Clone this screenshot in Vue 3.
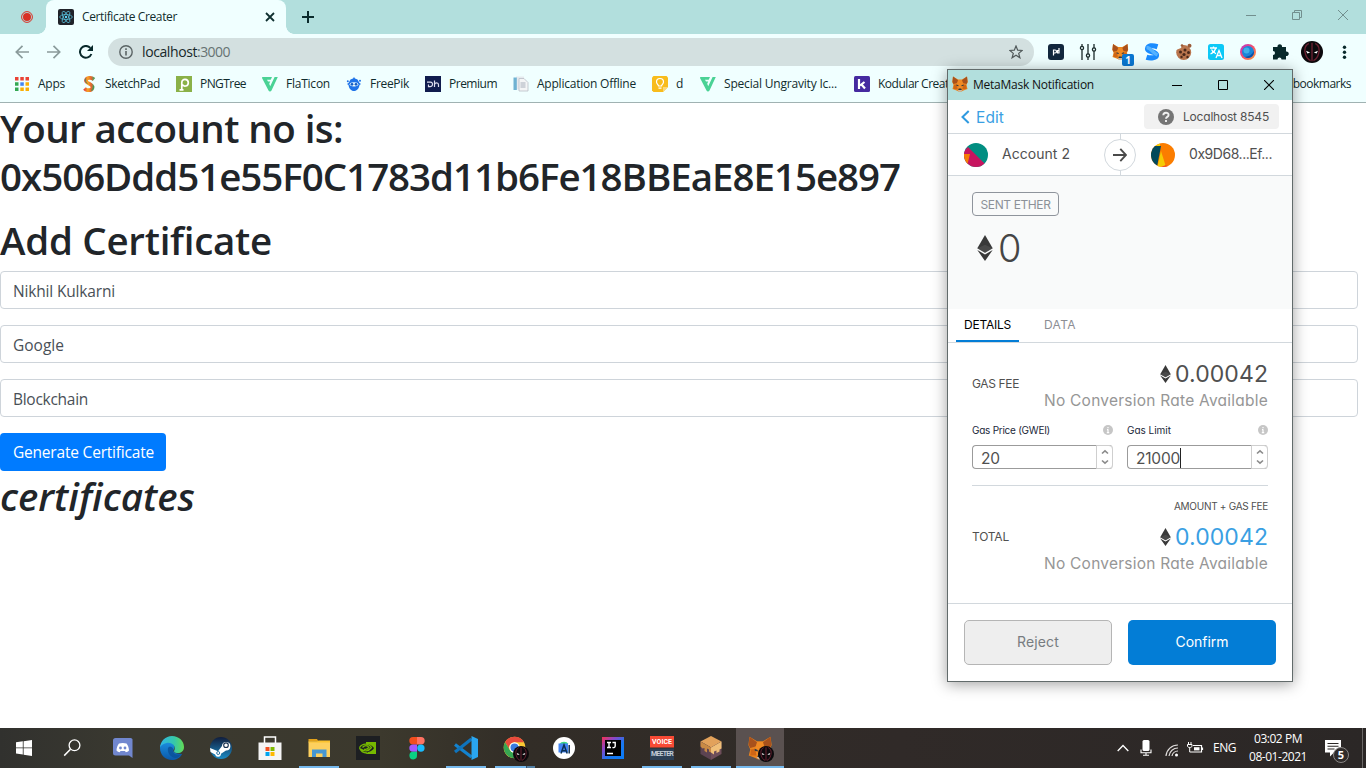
<script setup>
// Spreads the letters of a label so that it fills a given width in pixels.
const vFit = {
  mounted(el, { value }) {
    if (!value) return
    const range = document.createRange()
    range.selectNodeContents(el)
    const natural = range.getBoundingClientRect().width
    const count = el.textContent.trim().length
    el.style.letterSpacing = ((value - natural) / count).toFixed(3) + 'px'
  },
}

const bookmarks = [
  { icon: 'b-apps', label: 'Apps', w: 27 },
  { icon: 'b-sketch', label: 'SketchPad', w: 55 },
  { icon: 'b-png', label: 'PNGTree', w: 46 },
  { icon: 'b-flat', label: 'FlaTicon', w: 44 },
  { icon: 'b-freepik', label: 'FreePik', w: 39 },
  { icon: 'b-premium', label: 'Premium', w: 48 },
  { icon: 'b-doc', label: 'Application Offline', w: 99 },
  { icon: 'b-keep', label: 'd', w: 8 },
  { icon: 'b-flat', label: 'Special Ungravity Ic...', w: 113 },
  { icon: 'b-kodular', label: 'Kodular Creator', w: 82 },
]

const extensions = ['x-pd', 'x-sliders', 'x-fox', 'x-s', 'x-cookie', 'x-translate', 'x-orb', 'x-puzzle', 'x-avatar', 'x-menu']

const fields = [
  { value: 'Nikhil Kulkarni', w: 102 },
  { value: 'Google', w: 51 },
  { value: 'Blockchain', w: 75 },
]

const gasFields = [
  { label: 'Gas Price (GWEI)', w: 78, value: '20', vw: 19, caret: false },
  { label: 'Gas Limit', w: 44, value: '21000', vw: 44, caret: true },
]

const tasks = [
  { icon: 't-win' }, { icon: 't-search' }, { icon: 't-discord' }, { icon: 't-edge' },
  { icon: 't-steam' }, { icon: 't-store' }, { icon: 't-explorer', run: true }, { icon: 't-nvidia' },
  { icon: 't-figma' }, { icon: 't-vscode', run: true }, { icon: 't-chrome', run: true, multi: true },
  { icon: 't-studio' }, { icon: 't-idea' }, { icon: 't-voice', run: true },
  { icon: 't-launcher', run: true }, { icon: 't-metamask', active: true },
]
</script>

<template>
  <div class="screen">
    <svg class="sprite" width="0" height="0">
      <defs>
        <linearGradient id="gEdgeA" x1="0" y1="0" x2="1" y2="0"><stop offset="0" stop-color="#2fb5e8" /><stop offset=".6" stop-color="#36c8a8" /><stop offset="1" stop-color="#63dc55" /></linearGradient>
        <linearGradient id="gEdgeB" x1="0" y1="0" x2="0" y2="1"><stop offset="0" stop-color="#1b8fe0" /><stop offset="1" stop-color="#0b58a8" /></linearGradient>
        <linearGradient id="gSteam" x1="0" y1="0" x2="0" y2="1"><stop offset="0" stop-color="#111d3c" /><stop offset="1" stop-color="#1b8bc5" /></linearGradient>
        <linearGradient id="gOrb" x1="0" y1="0" x2="1" y2="1"><stop offset="0" stop-color="#b92fd0" /><stop offset=".5" stop-color="#f2506a" /><stop offset="1" stop-color="#ffa63e" /></linearGradient>
        <linearGradient id="gS" x1="0" y1="0" x2="1" y2="0"><stop offset="0" stop-color="#e8473c" /><stop offset=".35" stop-color="#f5a623" /><stop offset=".7" stop-color="#e9622f" /><stop offset="1" stop-color="#4d9f5e" /></linearGradient>
        <linearGradient id="gIdea" x1="0" y1="0" x2="1" y2="1"><stop offset="0" stop-color="#f9314f" /><stop offset=".3" stop-color="#8b46c8" /><stop offset=".6" stop-color="#1a78f0" /><stop offset="1" stop-color="#087cfa" /></linearGradient>
      </defs>

      <symbol id="fox" viewBox="0 0 32 32">
        <path fill="#e8821e" d="M2 1l10 6h8l10-6 1.500 11-2.500 6 2 8-8 3-4 2h-6l-4-2-8-3 2-8-2.500-6z" />
        <path fill="#a8511c" d="M2 1l11 8-3 5-7 2-2-4zM30 1L19 9l3 5 7 2 2-4z" />
        <path fill="#f08a24" d="M12 8h8l3 11-3 7h-8l-3-7z" />
        <path fill="#cf6616" d="M4 18l6-1 1 9-8 0zM28 18l-6-1-1 9 8 0z" />
        <path fill="#2d3a45" d="M9 17l4 1.500v2l-4-1zM23 17l-4 1.500v2l4-1zM13.500 25h5l1 3h-7z" />
        <path fill="#c9b8a8" d="M11 28h10l-3 3h-4z" />
      </symbol>
      <symbol id="mask" viewBox="0 0 24 24">
        <circle cx="12" cy="12" r="12" fill="#0c0a0d" />
        <path d="M8.500 2.500C4 5 3.500 10 5 14.500c1 3.500 3 6 5.500 7M15.500 2.500C20 5 20.500 10 19 14.500c-1 3.500-3 6-5.500 7M12 2v20" fill="none" stroke="#6a2030" stroke-width="1.500" />
        <path d="M5.500 10.500l4.500 2-3 1zM18.500 10.500l-4.500 2 3 1z" fill="#fff" />
      </symbol>
      <symbol id="eth" viewBox="0 0 16 26">
        <path fill="#393939" d="M8 0L.3 13.200 8 17.700l7.700-4.500z" /><path fill="#5a5a5a" d="M8 9.700L.3 13.200 8 17.700l7.700-4.500z" opacity=".5" />
        <path fill="#393939" d="M.3 15L8 26l7.700-11L8 19.500z" />
      </symbol>

      <symbol id="b-apps" viewBox="0 0 16 16">
        <path fill="#ea4335" d="M1 1h3.500v3.500H1zM6.300 1h3.500v3.500H6.300zM11.500 1H15v3.500h-3.500z" />
        <path fill="#34a853" d="M1 6.300h3.500v3.500H1zM1 11.500h3.500V15H1z" /><path fill="#4285f4" d="M6.300 6.300h3.500v3.500H6.300z" />
        <path fill="#fbaf05" d="M11.500 6.300H15v3.500h-3.500zM6.300 11.500h3.500V15H6.300zM11.500 11.500H15V15h-3.500z" />
      </symbol>
      <symbol id="b-sketch" viewBox="0 0 16 16">
        <path d="M13 3.500C10 1 5.500 1.500 5 4.500c-.3 3 7 3.500 6.500 7C11 15 6 15 3.500 12.500" fill="none" stroke="url(#gS)" stroke-width="3.800" />
        <path d="M4.500 2.500c-.8 2 .2 4 2 5M12.700 10c0 2-1 3.500-2.500 4.500" fill="none" stroke="#3e9a58" stroke-width="1" />
      </symbol>
      <symbol id="b-png" viewBox="0 0 16 16"><path fill="#8ab148" d="M0 0h16v16H0z" /><path d="M5.800 13.500V6.500c0-4.500 6.500-4 6.500.2 0 4-5 4.300-6 1.500M3.500 13.800h4" fill="none" stroke="#fff" stroke-width="1.700" /></symbol>
      <symbol id="b-flat" viewBox="0 0 16 16">
        <path fill="#4ad295" d="M.3 1h9.700L8.700 3.800H5l1 1.800h2.200L7.200 7.700l1 2.500L12.600 1h3.200L9.500 14.500a1.700 1.700 0 0 1-3 0L0 2z" />
      </symbol>
      <symbol id="b-freepik" viewBox="0 0 16 16">
        <path fill="#1f73e8" d="M8 1l1 1.500 2.500 1 2 3.500 1.500 1-1.500 1c-.5 3.500-2.500 6-5.500 6s-5-2.500-5.500-6L1 8l1.500-1 2-3.500 2.500-1z" /><circle cx="1.800" cy="5.200" r="1" fill="#1f73e8" /><circle cx="14" cy="4.800" r="1" fill="#1f73e8" />
        <ellipse cx="8" cy="8.300" rx="4.300" ry="2.100" fill="#f0ffff" /><circle cx="6" cy="8.300" r="1.400" fill="#145cc4" /><circle cx="10" cy="8.300" r="1.400" fill="#145cc4" />
      </symbol>
      <symbol id="b-premium" viewBox="0 0 16 16"><path fill="#101c4e" d="M0 0h16v16H0z" /><path d="M2 6.200h3.500c3 0 2.500 4.500-.5 4.500H3.500V8.500M9.500 4.500v6.500M9.500 8.500c.5-2 4-2.200 4 .3V11" fill="none" stroke="#dde" stroke-width="1.200" /></symbol>
      <symbol id="b-doc" viewBox="0 0 16 16">
        <path fill="#e6eaee" d="M3 .5h8v13H3z" /><path fill="#6fb2d2" d="M.5 1.500h3.300V14H.5z" /><path fill="#f4f5f6" stroke="#b9bec6" stroke-width=".8" d="M6 2.500h5l4 4V15H6z" />
        <path stroke="#9fa8b4" stroke-width=".9" d="M7.500 7h5M7.500 9h5M7.500 11h5" />
      </symbol>
      <symbol id="b-keep" viewBox="0 0 16 16">
        <path fill="#f8bc1c" d="M1.500 0h13L16 1.500V11l-5 5H1.500L0 14.500v-13z" /><path fill="#fad779" d="M11 16v-5h5z" />
        <path d="M6.500 10c0-1.500-2-2-2-4a3.500 3.500 0 0 1 7 0c0 2-2 2.500-2 4zM6.500 12.200h3" fill="none" stroke="#fff" stroke-width="1.200" />
      </symbol>
      <symbol id="b-kodular" viewBox="0 0 16 16"><rect width="16" height="16" rx="1.500" fill="#452aa0" /><path d="M5 3v10M10.500 6L6 9.500M7.500 8.500l3.500 4" stroke="#fff" stroke-width="2.200" fill="none" /></symbol>

      <symbol id="x-pd" viewBox="0 0 24 24"><rect x="4" y="4" width="16" height="16" rx="3" fill="#12273d" /><path d="M9.500 15.500v-5.500h1.500c2 0 2 3 0 3H9.500M15 8v5h-1.500v-2.500H15" fill="none" stroke="#fff" stroke-width="1.200" /></symbol>
      <symbol id="x-sliders" viewBox="0 0 24 24">
        <path d="M6 4v16M12 4v16M18 4v16" stroke="#1c2b2b" stroke-width="1.300" />
        <g fill="#f0ffff" stroke="#1c2b2b" stroke-width="1.300"><circle cx="6" cy="8" r="1.600" /><circle cx="12" cy="15.500" r="1.600" /><circle cx="18" cy="9.500" r="1.600" /></g>
      </symbol>
      <symbol id="x-fox" viewBox="0 0 24 24"><use href="#fox" x="4" y="3.500" width="16.500" height="16.500" /></symbol>
      <symbol id="x-s" viewBox="0 0 24 24"><path d="M17.500 6.700C12 5 8 5.500 7.500 9c0 3 9 2.500 9 6 0 3-6 3.500-10 2.200" fill="none" stroke="#1a8cff" stroke-width="5.200" /><path d="M6.500 7.500c5 0 5 5 11 7.500" fill="none" stroke="#54b2ff" stroke-width="3.500" /></symbol>
      <symbol id="x-cookie" viewBox="0 0 24 24">
        <circle cx="11.700" cy="12.500" r="7.500" fill="#b9754d" /><path fill="#f0ffff" d="M4 3h7L9 8l-5 2z" /><circle cx="10" cy="5.500" r="1.300" fill="#9b5b38" /><circle cx="17.500" cy="5.800" r="2" fill="#9b5b38" />
        <g fill="#4b2a1c"><circle cx="8.500" cy="12" r="1.500" /><circle cx="13" cy="10" r="1.500" /><circle cx="12" cy="14.500" r="1.600" /><circle cx="16.500" cy="12.500" r="1.500" /><circle cx="9.500" cy="17" r="1.200" /><circle cx="15.500" cy="17" r="1.200" /></g>
      </symbol>
      <symbol id="x-translate" viewBox="0 0 24 24"><rect x="4" y="4" width="16" height="16" rx="2.500" fill="#0cc9f7" /><path d="M6 8h7M9.500 6.500V8M11.700 8c-.7 3-3 5-5.200 6M7.500 9.500c1 2 3 3.500 4.500 4.300M12 18l3-7.500L18 18M13 15.500h4" fill="none" stroke="#fff" stroke-width="1.300" /></symbol>
      <symbol id="x-orb" viewBox="0 0 24 24"><circle cx="12" cy="12" r="8" fill="url(#gOrb)" /><circle cx="12" cy="12" r="6" fill="#1a86d8" /><circle cx="10.500" cy="10.500" r="3" fill="#3fb0ea" /><path d="M17.800 11a5.900 5.900 0 0 1-9 6c4.500-.5 7.500-2.500 9-6z" fill="#1252a5" /></symbol>
      <symbol id="x-puzzle" viewBox="0 0 24 24"><path fill="#08292b" d="M5 7h4.500a2.300 2.300 0 1 1 4.500 0H18v4.500a2.300 2.300 0 1 1 0 4.500v3.500h-4.500a2 2 0 1 0-4 0H5V15a2 2 0 1 0 0-4z" /></symbol>
      <symbol id="x-avatar" viewBox="0 0 24 24"><use href="#mask" x="1" y="1" width="22" height="22" /></symbol>
      <symbol id="x-menu" viewBox="0 0 24 24"><g fill="#08292b"><circle cx="12.500" cy="7.200" r="1.700" /><circle cx="12.500" cy="12.200" r="1.700" /><circle cx="12.500" cy="17.200" r="1.700" /></g></symbol>

      <symbol id="t-win" viewBox="0 0 24 24"><path fill="#fff" d="M3 6.300l6.800-1v6.200H3zM10.600 5.200L19 4v7.500h-8.400zM3 12.300h6.800v6.300L3 17.600zM10.600 12.300H19V20l-8.400-1.200z" /></symbol>
      <symbol id="t-search" viewBox="0 0 24 24"><circle cx="12.500" cy="9.300" r="5.400" fill="none" stroke="#fff" stroke-width="1.300" /><path d="M8.500 13.300L2.200 19.600" stroke="#fff" stroke-width="1.500" /></symbol>
      <symbol id="t-discord" viewBox="0 0 24 24"><path fill="#7187cf" d="M4.500 2h15A2 2 0 0 1 21.500 4.500V22L18 19.500H4.500A2.500 2.500 0 0 1 2 17V4.500A2.500 2.500 0 0 1 4.500 2z" /><path fill="#fff" d="M8 7.500c2-.8 5.500-.8 7.500 0 1.500 2 2.500 4.500 2.500 7-1 1.200-2 1.600-3.200 1.700l-.8-1.200H9.500l-.8 1.200c-1.200-.1-2.200-.5-3.200-1.700 0-2.500 1-5 2.500-7z" /><circle cx="9.500" cy="12" r="1.400" fill="#7187cf" /><circle cx="14" cy="12" r="1.400" fill="#7187cf" /></symbol>
      <symbol id="t-edge" viewBox="0 0 24 24">
        <path fill="url(#gEdgeB)" d="M0 12C0 7 5 5 9 6c5 1 6 4 5 7-2 2 0 5 8 5-2 4-6 6-10 6C5 24 0 18.500 0 12z" />
        <path fill="url(#gEdgeA)" d="M0 11.500C.5 5 5.500 0 12 0c7 0 12 5 12 11 0 4-3 6-6 6-4 0-4.500-1.500-3.500-3C16 9 11 6 6.500 7 3 7.700 1 9.500 0 11.500z" />
        <path fill="#0a4f96" d="M8 12c-1 4 2 9 7 10 3 0 5.500-2 7-4-6 1.500-10 0-9-5.500-1-2-4-2.500-5-.5z" opacity=".75" />
      </symbol>
      <symbol id="t-steam" viewBox="0 0 24 24"><circle cx="12" cy="12" r="11" fill="url(#gSteam)" /><path fill="#fff" d="M1 12l8 3.200 4-5.200a4.200 4.200 0 1 1 4 4.500l-5 3.300a3 3 0 0 1-5.900.8L1.500 16z" /><circle cx="17" cy="9.200" r="2.300" fill="#fff" stroke="#18314f" stroke-width="1.100" /><circle cx="9.200" cy="17" r="1.500" fill="none" stroke="#1a699c" stroke-width=".9" /></symbol>
      <symbol id="t-store" viewBox="0 0 24 24"><path d="M6.500 7V1h11v6" fill="none" stroke="#fff" stroke-width="1.500" /><path fill="#f5f5f5" d="M.5 6.500h23V24H.5z" /><path fill="#f25022" d="M7.500 11h4v4h-4z" /><path fill="#7fba00" d="M12.500 11h4v4h-4z" /><path fill="#00a4ef" d="M7.500 16h4v4h-4z" /><path fill="#ffb900" d="M12.500 16h4v4h-4z" /></symbol>
      <symbol id="t-explorer" viewBox="0 0 24 24"><path fill="#e3a21a" d="M1.500 3h8.500l1.500 2.500H1.500z" /><path fill="#fdd05e" d="M1.500 5.500H23V21H1.500z" /><path fill="#fbc22d" d="M1.500 5.500H10l1.500-1H23v2H1.500z" /><path fill="#4697d2" d="M5 13.500h14.500V21h-4v-3.500H9V21H5z" /></symbol>
      <symbol id="t-nvidia" viewBox="0 0 24 24"><path fill="#1d1f22" d="M0 0h24v24H0z" /><path fill="#76b900" d="M10 6h10v12H10l2-2c3-.5 5-2 6-4-2-2.500-5-4-8-4z" /><path fill="none" stroke="#76b900" stroke-width="1.300" d="M3.500 11.500c3-4.500 9-4.500 12 0-3 4-7.500 4.500-10.500 1.500M6.500 11.500c2-2.500 5-2.500 6.500 0-2 2-3.500 2.500-5 1.500M3.500 11.500c1 3.500 4 5.500 7.500 5.500" /></symbol>
      <symbol id="t-figma" viewBox="0 0 24 24"><path fill="#f24e1e" d="M12 1H8a3.700 3.700 0 0 0 0 7.400h4z" /><path fill="#ff7262" d="M12 1h4a3.700 3.700 0 0 1 0 7.400h-4z" /><path fill="#a259ff" d="M12 8.400H8a3.700 3.700 0 0 0 0 7.400h4z" /><circle cx="15.900" cy="12.100" r="3.700" fill="#1abcfe" /><path fill="#0acf83" d="M8 15.800h4v3.700a3.800 3.800 0 1 1-4-3.700z" /></symbol>
      <symbol id="t-vscode" viewBox="0 0 24 24"><path fill="none" stroke="#1383cf" stroke-width="3.200" d="M1 8.500L17.500 21" /><path fill="none" stroke="#0f74bd" stroke-width="3.200" d="M1 16L17.500 3" /><path fill="#2aa6f0" d="M17.500 0L24 3v18l-6.500 3z" /></symbol>
      <symbol id="t-chrome" viewBox="0 0 24 24">
        <circle cx="11.500" cy="11.500" r="10.800" fill="#fcc934" /><path fill="#e84a3d" d="M2.100 6.200a10.800 10.800 0 0 1 18.800 0H11.500a5.200 5.200 0 0 0-4.500 8z" /><path fill="#37a652" d="M2.100 6.200a10.800 10.800 0 0 0 9.200 16.100l4.700-8.100a5.200 5.200 0 0 1-9 0z" />
        <circle cx="11.500" cy="11.500" r="5.200" fill="#fff" /><circle cx="11.500" cy="11.500" r="4" fill="#3a7be0" />
      </symbol>
      <symbol id="t-studio" viewBox="0 0 24 24"><circle cx="12" cy="12" r="11" fill="#fff" /><path fill="#3ddc84" d="M7.500 8a5 4 0 0 1 9 0z" /><path fill="#4285f4" d="M6.500 7.500H16v9H6.500z" /><path d="M9 17.500l3-8.500L15.200 17.500M10 14.700h4.200M17.200 9v8.500" fill="none" stroke="#0b3054" stroke-width="1.500" /></symbol>
      <symbol id="t-idea" viewBox="0 0 24 24"><path fill="url(#gIdea)" d="M1 1h22v22H1z" /><path fill="#000" d="M4 4h16v16H4z" /><path d="M6 6.500h4M8 6.500v5M6 11.500h4M11.500 6.500h2.700V10c0 1.500-1.500 2-2.700 1.300M6 17.500h6" fill="none" stroke="#fff" stroke-width="1.400" /></symbol>
      <symbol id="t-voice" viewBox="0 0 24 24"><path fill="#f84a35" d="M0 0h24v11.500H0z" /><path fill="#2c4056" d="M0 12.500h24V24H0z" /></symbol>
      <symbol id="t-launcher" viewBox="0 0 24 24"><path fill="#e2a25b" d="M12 0l10.500 5.500L12 11.500 1.500 5.500z" /><path fill="#5c4351" d="M1.500 5.500L12 11.500V24L1.500 18z" /><path fill="#6e4e5a" d="M22.500 5.500L12 11.500V24l10.500-6z" /><path fill="#c98a45" d="M1.500 5.500L12 11.500v5l-2-1v-2l-2-1v4l-2.500-1.500v-3l-2 .5-2-2z" /><path fill="#f0bf78" d="M22.500 5.500L12 11.500v5l3 2v-3l2.500-1v2.500l3-1.500v-2l2-1z" /></symbol>
      <symbol id="t-metamask" viewBox="0 0 24 24"><use href="#fox" x="0" y="0" width="24" height="24" /></symbol>
    </svg>

    <header class="tabstrip">
      <div class="pinned"><svg width="12" height="12" viewBox="0 0 12 12"><circle cx="6" cy="6" r="5.400" fill="none" stroke="#d93025" stroke-width="1" /><circle cx="6" cy="6" r="4" fill="#d93025" /></svg></div>
      <div class="tab">
        <svg width="16" height="16" viewBox="0 0 16 16"><rect width="16" height="16" rx="2" fill="#20232a" /><g fill="none" stroke="#55bcd6" stroke-width=".8"><ellipse cx="8" cy="8" rx="6.300" ry="2.500" /><ellipse cx="8" cy="8" rx="6.300" ry="2.500" transform="rotate(60 8 8)" /><ellipse cx="8" cy="8" rx="6.300" ry="2.500" transform="rotate(120 8 8)" /></g><circle cx="8" cy="8" r="1.200" fill="#61dafb" /></svg>
        <span class="tab-title"><span v-fit="95">Certificate Creater</span></span>
        <svg width="10" height="10" viewBox="0 0 10 10"><path d="M1 1l8 8M9 1L1 9" stroke="#0f3030" stroke-width="1.800" /></svg>
      </div>
      <svg class="newtab" width="12" height="12" viewBox="0 0 12 12"><path d="M6 0v12M0 6h12" stroke="#0b2b2c" stroke-width="2" /></svg>
      <div class="wincontrols">
        <i><svg width="10" height="10" viewBox="0 0 10 10"><path d="M0 5.500h10" stroke="#728f8e" /></svg></i>
        <i><svg width="10" height="10" viewBox="0 0 10 10"><path d="M.5 2.500h7v7h-7zM2.500 2.500v-2h7v7h-2" fill="none" stroke="#728f8e" /></svg></i>
        <i><svg width="10" height="10" viewBox="0 0 10 10"><path d="M0 0l10 10M10 0L0 10" stroke="#728f8e" /></svg></i>
      </div>
    </header>

    <div class="toolbar">
      <div class="nav">
        <i><svg width="14" height="14" viewBox="0 0 14 14"><path d="M14 7H1.500M7.500 .8L1.300 7l6.200 6.200" fill="none" stroke="#8a9b9b" stroke-width="1.700" /></svg></i>
        <i><svg width="14" height="14" viewBox="0 0 14 14"><path d="M0 7h12.500M6.500 .8L12.700 7l-6.200 6.200" fill="none" stroke="#8a9b9b" stroke-width="1.700" /></svg></i>
        <i><svg width="14" height="14" viewBox="0 0 14 14"><path d="M12.400 9A5.900 5.900 0 1 1 11.300 2.900" fill="none" stroke="#08292b" stroke-width="2" /><path d="M14 0v6H8z" fill="#08292b" /></svg></i>
      </div>
      <div class="omnibox">
        <svg width="14" height="14" viewBox="0 0 14 14"><circle cx="7" cy="7" r="6.200" fill="none" stroke="#5b6465" stroke-width="1.400" /><path d="M7 6v4.500M7 3.300v1.600" stroke="#5b6465" stroke-width="1.600" /></svg>
        <span class="url"><span v-fit="55">localhost</span><em v-fit="33">:3000</em></span>
        <svg width="14" height="14" viewBox="0 0 14 14"><path d="M7 1l1.700 4.200 4.500.3-3.500 2.900 1.200 4.400L7 10.300l-3.900 2.500 1.200-4.400L.8 5.500l4.500-.3z" fill="none" stroke="#51595a" stroke-width="1.200" /></svg>
      </div>
      <div class="exts">
        <i v-for="x in extensions" :key="x"><svg width="24" height="24"><use :href="'#' + x" /></svg><b v-if="x === 'x-fox'">1</b></i>
      </div>
    </div>

    <nav class="bookmarks">
      <div v-for="b in bookmarks" :key="b.label" class="bm"><svg width="16" height="16"><use :href="'#' + b.icon" /></svg><span v-fit="b.w">{{ b.label }}</span></div>
      <span class="other" v-fit="91">Other bookmarks</span>
    </nav>

    <main class="page">
      <h1 class="account"><span v-fit="343">Your account no is:</span><br /><span v-fit="900">0x506Ddd51e55F0C1783d11b6Fe18BBEaE8E15e897</span></h1>
      <h1><span v-fit="272">Add Certificate</span></h1>
      <div v-for="f in fields" :key="f.value" class="field"><span v-fit="f.w">{{ f.value }}</span></div>
      <button class="generate"><span v-fit="141">Generate Certificate</span></button>
      <h1 class="italic"><span v-fit="195">certificates</span></h1>
    </main>

    <footer class="taskbar">
      <div class="tasks">
        <div v-for="t in tasks" :key="t.icon" class="task" :class="{ run: t.run, active: t.active, multi: t.multi }">
          <svg width="24" height="24"><use :href="'#' + t.icon" /></svg>
          <svg v-if="t.multi || t.active" class="profile" width="16" height="16"><use href="#mask" /></svg>
          <div v-if="t.icon === 't-voice'" class="vm"><span v-fit="20">VOICE</span><span v-fit="22">MEETER</span></div>
        </div>
      </div>
      <div class="tray">
        <svg class="chev" width="12" height="8" viewBox="0 0 12 8"><path d="M.7 7L6 1.500 11.300 7" fill="none" stroke="#fff" stroke-width="1.300" /></svg>
        <svg class="mic" width="12" height="16" viewBox="0 0 12 16"><rect x="2.500" y="0" width="7" height="11" rx="1.500" fill="#fff" /><path d="M1 9.500v3.200h10V9.500M6 13v2.500M3 15.300h6" fill="none" stroke="#fff" stroke-width="1.100" /></svg>
        <svg class="wifi" width="14" height="14" viewBox="0 0 14 14"><g fill="none" stroke="#e0dddc" stroke-width="1.200"><path d="M1 13A12 12 0 0 1 13 2" /><path d="M4 13a9 9 0 0 1 9-8" /><path d="M7 13a6 6 0 0 1 6-5" /></g><circle cx="11.500" cy="12" r="1.500" fill="#fff" /></svg>
        <svg class="battery" width="17" height="12" viewBox="0 0 17 12"><path d="M6 3.500h8.500v6.500H5M15.500 5.500v2.500" fill="none" stroke="#fff" stroke-width="1.200" /><path d="M7 5.200h5.500v3.200H7z" fill="#fff" /><path d="M1.500 0v2M4 0v2M.5 2.500H5V4C5 6 .5 6 .5 4zM2.700 5.500V10H5" fill="none" stroke="#fff" stroke-width="1" /></svg>
        <span class="lang"><span v-fit="23">ENG</span></span>
        <div class="clock"><span v-fit="48">03:02 PM</span><span v-fit="58">08-01-2021</span></div>
        <div class="action"><svg width="17" height="17" viewBox="0 0 17 17"><path fill="#fff" d="M0 0h16v12.500H9l-4 4v-4H0z" /><path d="M2.500 3.500h11M2.500 6.300h11M2.500 9h7" stroke="#2c2827" stroke-width="1.100" /></svg><b>5</b></div>
      </div>
    </footer>

    <section class="popup">
      <div class="titlebar">
        <svg width="16" height="16"><use href="#fox" /></svg>
        <span class="ptitle"><span v-fit="121">MetaMask Notification</span></span>
        <div class="pcontrols">
          <i><svg width="10" height="10" viewBox="0 0 10 10"><path d="M0 5.500h10" stroke="#000" /></svg></i>
          <i><svg width="10" height="10" viewBox="0 0 10 10"><path d="M.5 .5h9v9h-9z" fill="none" stroke="#000" /></svg></i>
          <i><svg width="10" height="10" viewBox="0 0 10 10"><path d="M0 0l10 10M10 0L0 10" stroke="#000" stroke-width="1.100" /></svg></i>
        </div>
      </div>
      <div class="phead">
        <div class="edit"><svg width="9" height="14" viewBox="0 0 9 14"><path d="M7.700 1L1.500 7l6.200 6" fill="none" stroke="#2f9ae0" stroke-width="2" /></svg><span v-fit="28">Edit</span></div>
        <div class="network"><svg width="16" height="16" viewBox="0 0 16 16"><circle cx="8" cy="8" r="8" fill="#757575" /><path d="M5.300 6.300C5.300 3 10.600 3 10.600 6c0 2-2.600 1.800-2.600 3.800M8 10.900v2" fill="none" stroke="#f0f0f0" stroke-width="1.900" /></svg><span v-fit="86">Localhost 8545</span></div>
      </div>
      <div class="parties">
        <svg class="ident" width="24" height="24" viewBox="0 0 24 24"><clipPath id="c1"><circle cx="12" cy="12" r="12" /></clipPath><g clip-path="url(#c1)"><path fill="#018e81" d="M0 0h24v24H0z" /><path fill="#c7145f" d="M4 4l20 20H0V8z" /><path fill="#f57d04" d="M0 11h6L3.500 21H0z" /></g></svg>
        <span class="pname from"><span v-fit="68">Account 2</span></span>
        <div class="arrow"><svg width="14" height="14" viewBox="0 0 14 14"><path d="M0 7h13M7.300 .8L13 7l-5.700 6.200" fill="none" stroke="#4a4a4a" stroke-width="1.900" /></svg></div>
        <svg class="ident" width="24" height="24" viewBox="0 0 24 24"><g clip-path="url(#c1)"><path fill="#fb7d00" d="M0 0h24v24H0z" /><path fill="#03495a" d="M0 3h10L6 24H0z" /><path fill="#f5cb04" d="M10 8l5 16-9 2zM4 3l5-3 0 3z" /><path fill="#f2452d" d="M10 24l5-2 2 2z" /></g></svg>
        <span class="pname to"><span v-fit="83">0x9D68...Ef...</span></span>
      </div>
      <div class="summary">
        <span class="badge"><span v-fit="70">SENT ETHER</span></span>
        <div class="amount"><svg width="16" height="26"><use href="#eth" /></svg><span>0</span></div>
      </div>
      <div class="ptabs"><div class="on"><span v-fit="47">DETAILS</span></div><div><span v-fit="32">DATA</span></div></div>
      <div class="details">
        <div class="fee">
          <span class="lbl"><span v-fit="47">GAS FEE</span></span>
          <div class="vals"><div class="eth"><svg width="11" height="18"><use href="#eth" /></svg><span v-fit="93">0.00042</span></div><div class="conv"><span v-fit="224">No Conversion Rate Available</span></div></div>
        </div>
        <div class="gas">
          <div v-for="g in gasFields" :key="g.label" class="gasfield">
            <div class="glabel"><span v-fit="g.w">{{ g.label }}</span><svg width="10" height="10" viewBox="0 0 10 10"><circle cx="5" cy="5" r="5" fill="#c6c6c6" /><path d="M5 4.200V8M5 2v1.300M4 4.700h1M3.800 7.700h2.400" stroke="#fff" stroke-width="1.200" /></svg></div>
            <div class="ginput"><span v-fit="g.vw">{{ g.value }}</span><i v-if="g.caret" class="caret"></i>
              <div class="spin"><svg width="8" height="16" viewBox="0 0 8 16"><path d="M1 4.500L4 1.800 7 4.500M1 11.500L4 14.200 7 11.500" fill="none" stroke="#8b8b8b" stroke-width="1.600" /></svg></div>
            </div>
          </div>
        </div>
        <div class="sumlabel"><span v-fit="94">AMOUNT + GAS FEE</span></div>
        <div class="fee total">
          <span class="lbl"><span v-fit="37">TOTAL</span></span>
          <div class="vals"><div class="eth"><svg width="11" height="18"><use href="#eth" /></svg><span v-fit="93">0.00042</span></div><div class="conv"><span v-fit="224">No Conversion Rate Available</span></div></div>
        </div>
      </div>
      <div class="pfoot"><button class="reject"><span v-fit="42">Reject</span></button><button class="confirm"><span v-fit="53">Confirm</span></button></div>
    </section>
  </div>
</template>

<style>
html, body { margin: 0; overflow: hidden; background: #fff; }
</style>

<style scoped>
.screen { position: relative; width: 1366px; height: 768px; overflow: hidden; display: flex; flex-direction: column; background: #fff; font-family: "Open Sans", "Noto Sans", sans-serif; font-stretch: 92%; box-sizing: border-box; white-space: nowrap; }
.screen * { box-sizing: border-box; }
.sprite { position: absolute; }
svg { display: block; flex: none; }
i, em { font-style: normal; }
button { font-family: inherit; font-stretch: inherit; border: 0; padding: 0; margin: 0; }

.tabstrip { height: 34px; flex: none; display: flex; background: #b2dfdd; }
.pinned { width: 46px; display: flex; align-items: center; padding-left: 21px; background: #b2dfdd; }
.tab { position: relative; width: 240px; height: 34px; display: flex; align-items: center; padding: 0 11px 0 12px; background: #f0ffff; border-radius: 8px 8px 0 0; }
.tab::before, .tab::after { content: ""; position: absolute; bottom: 0; width: 8px; height: 8px; }
.tab::before { left: -8px; background: radial-gradient(circle at 0 0, #b2dfdd 7.5px, #f0ffff 8px); }
.tab::after { right: -8px; background: radial-gradient(circle at 100% 0, #b2dfdd 7.5px, #f0ffff 8px); }
.tab-title { flex: 1; margin: -2px 0 0 8px; font-size: 12px; color: #102c2d; }
.newtab { margin: 11px 0 0 16px; }
.wincontrols { margin-left: auto; display: flex; height: 29px; }
.wincontrols i { width: 46px; display: flex; align-items: center; justify-content: center; }

.toolbar { height: 36px; flex: none; display: flex; align-items: center; background: #f0ffff; }
.nav { width: 108px; padding-left: 6px; display: flex; }
.nav i, .exts i { position: relative; width: 32px; display: flex; justify-content: center; align-items: center; }
.omnibox { width: 926px; height: 28px; border-radius: 14px; background: #d3e0e0; display: flex; align-items: center; padding: 0 11px; }
.url { flex: 1; display: flex; margin: -1px 0 0 9px; font-size: 14px; color: #17282a; }
.url em { color: #667373; }
.exts { display: flex; margin-left: 6px; }
.exts b { position: absolute; left: 18px; top: 14px; width: 12px; height: 12px; border-radius: 2px; background: #0a77d2; color: #fff; font-size: 10px; line-height: 12px; text-align: center; }

.bookmarks { height: 33px; flex: none; display: flex; align-items: center; gap: 16px; padding: 0 15px 4px 14px; background: #f0ffff; border-bottom: 1px solid #a0b2b2; font-size: 12px; color: #102c2d; }
.bm { display: flex; align-items: center; gap: 8px; }
.bm span, .other { margin-top: -2px; }
.bm:nth-child(10) { margin-left: 1px; }
.other { margin-left: auto; }

.page { flex: 1; width: 1358px; color: #212529; }
h1 { margin: 0 0 8px; padding-top: 1px; height: 48px; font-size: 38.5px; font-weight: 600; font-stretch: 100%; line-height: 48px; }
.account { height: 96px; margin-bottom: 16px; }
.field { height: 38px; margin-bottom: 16px; border: 1px solid #ced4da; border-radius: 4px; padding: 1px 12px 0; line-height: 36px; font-size: 15.5px; color: #495057; }
.generate { display: block; width: 166px; height: 38px; border-radius: 4px; background: #007bff; color: #fff; font-size: 15.5px; line-height: 38px; text-align: left; padding-left: 13px; }
.italic { font-style: italic; }

.taskbar { height: 40px; flex: none; display: flex; background: linear-gradient(90deg, #31312e 0, #3a3930 130px, #3c392d 380px, #322d27 520px, #302a28 900px, #2b2726 1366px); }
.tasks { display: flex; gap: 1px; padding-left: 1px; }
.task { position: relative; width: 48px; height: 40px; padding: 8px 12px; }
.task.run::after { content: ""; position: absolute; left: 4px; bottom: 0; width: 40px; height: 2px; background: #76b9ed; }
.task.multi::after { background: linear-gradient(90deg, #76b9ed 31px, #3b5165 31px, #3b5165 32px, #527fa3 32px); }
.task.active { background: #5a5150; border-bottom: 2px solid #76b9ed; }
.profile { position: absolute; left: 22px; top: 18px; }
.vm { position: absolute; left: 12px; top: 8px; width: 24px; display: flex; flex-direction: column; align-items: center; font: 700 7px/12px Roboto, sans-serif; color: #fff; }
.vm span + span { color: #c3ccd6; }
.tray { margin-left: auto; width: 246px; display: flex; align-items: center; border-right: 1px solid #6a6766; margin-right: 3px; color: #fff; font-size: 12px; }
.mic { margin-left: 11px; } .wifi { margin-left: 13px; margin-top: 3px; } .battery { margin-left: 8px; }
.lang { margin: -2px 0 0 9px; width: 24px; }
.clock { width: 60px; margin: -3px 0 0 11px; display: flex; flex-direction: column; align-items: center; line-height: 18px; padding-top: 2px; }
.action { position: relative; margin-left: 17px; }
.action b { position: absolute; left: 8px; top: 7px; width: 16px; height: 16px; border-radius: 8px; border: 1px solid #8a8786; background: #2f2b2a; font-size: 11px; line-height: 14px; text-align: center; }

.popup { position: absolute; left: 947px; top: 69px; width: 346px; height: 613px; border: 1px solid #626b6b; background: #fff; box-shadow: 0 2px 14px rgba(0, 0, 0, .38); font-family: Inter, "Open Sans", sans-serif; font-feature-settings: "cv11" 1; font-weight: 400; color: #505050; }
.titlebar { height: 30px; background: #b2dfdd; display: flex; align-items: center; padding-left: 4px; font-family: "Open Sans", sans-serif; font-weight: 400; color: #111; font-size: 12px; }
.titlebar > svg { margin-top: -2px; }
.ptitle { margin: -1px 0 0 5px; flex: 1; }
.pcontrols { display: flex; margin-top: -1px; }
.pcontrols i { width: 46px; display: flex; justify-content: center; }
.phead { height: 34px; border-bottom: 1px solid #d2d8dd; display: flex; align-items: center; justify-content: space-between; padding: 0 13px; }
.edit { display: flex; align-items: center; gap: 6px; color: #3a9fe3; font-size: 15.5px; }
.edit span { padding-top: 2px; }
.network { width: 135px; height: 25px; border-radius: 4px; background: #f1f1f1; display: flex; align-items: center; gap: 9px; padding-left: 14px; font-size: 12px; }
.parties { height: 42px; border-bottom: 1px solid #d2d8dd; display: flex; align-items: center; padding-left: 16px; font-size: 14px; background: linear-gradient(#d2d8dd, #d2d8dd) 172px 0 / 1px 41px no-repeat; }
.pname { margin-top: -2px; }
.pname.from { width: 102px; padding-left: 14px; margin-right: 14px; }
.pname.to { padding-left: 14px; }
.arrow { width: 32px; height: 32px; border: 1px solid #d2d8dd; border-radius: 16px; background: #fff; display: flex; align-items: center; justify-content: center; margin-right: 15px; }
.summary { height: 133px; background: #f9fafa; padding: 16px 24px; }
.badge { display: flex; justify-content: center; align-items: center; width: 87px; height: 24px; border: 1px solid #8f949c; border-radius: 4px; font-size: 12px; color: #8c9198; }
.amount { display: flex; align-items: center; height: 44px; margin: 10px 0 0 5px; gap: 5px; font-size: 38px; font-weight: 300; color: #454545; }
.ptabs { height: 34px; border-bottom: 1px solid #d2d8dd; display: flex; padding-left: 8px; font-size: 12px; color: #8c8e94; }
.ptabs div { height: 33px; line-height: 32px; padding: 0 8px; margin-right: 17px; }
.ptabs .on { width: 63px; color: #000; border-bottom: 2px solid #037dd6; }
.details { height: 260px; padding: 19px 24px 0; }
.fee { display: flex; justify-content: space-between; height: 50px; }
.lbl { font-size: 12px; line-height: 16px; margin-top: 14px; }
.eth { display: flex; justify-content: flex-end; align-items: center; gap: 4px; height: 24px; font-size: 23px; }
.conv { text-align: right; font-size: 15.5px; line-height: 22px; margin-top: 4px; color: #969696; }
.gas { display: flex; gap: 14px; margin-top: 9px; padding-bottom: 16px; border-bottom: 1px solid #d2d8dd; }
.gasfield { width: 141px; }
.glabel { display: flex; justify-content: space-between; align-items: center; height: 17px; font-size: 10px; color: #22283a; }
.ginput { display: flex; align-items: center; height: 24px; margin-top: 7px; padding-left: 8px; border: 1px solid #9b9b9b; border-right-color: #cfcfcf; border-radius: 4px; font-size: 15.5px; }
.ginput > span { padding-top: 2px; }
.caret { width: 1px; height: 20px; margin-top: 2px; background: #222; }
.spin { margin-left: auto; width: 17px; height: 24px; border: 1px solid #cfcfcf; border-radius: 0 4px 4px 0; margin-right: -1px; display: flex; align-items: center; justify-content: center; background: #fff; }
.sumlabel { margin-top: 12px; height: 17px; line-height: 17px; text-align: right; font-size: 10px; }
.total { margin-top: 10px; }
.total .lbl { margin-top: 4px; }
.total .eth span { color: #3a9fe3; }
.total .conv { margin-top: 4px; }
.pfoot { height: 78px; border-top: 1px solid #d2d8dd; display: flex; gap: 16px; padding: 16px; }
.pfoot button { width: 148px; height: 45px; border-radius: 5px; font-size: 14px; font-feature-settings: inherit; padding-bottom: 2px; }
.reject { background: #eee; border: 1px solid #b5b5b5; color: #777c80; }
.confirm { background: #037dd6; color: #fff; }
</style>
